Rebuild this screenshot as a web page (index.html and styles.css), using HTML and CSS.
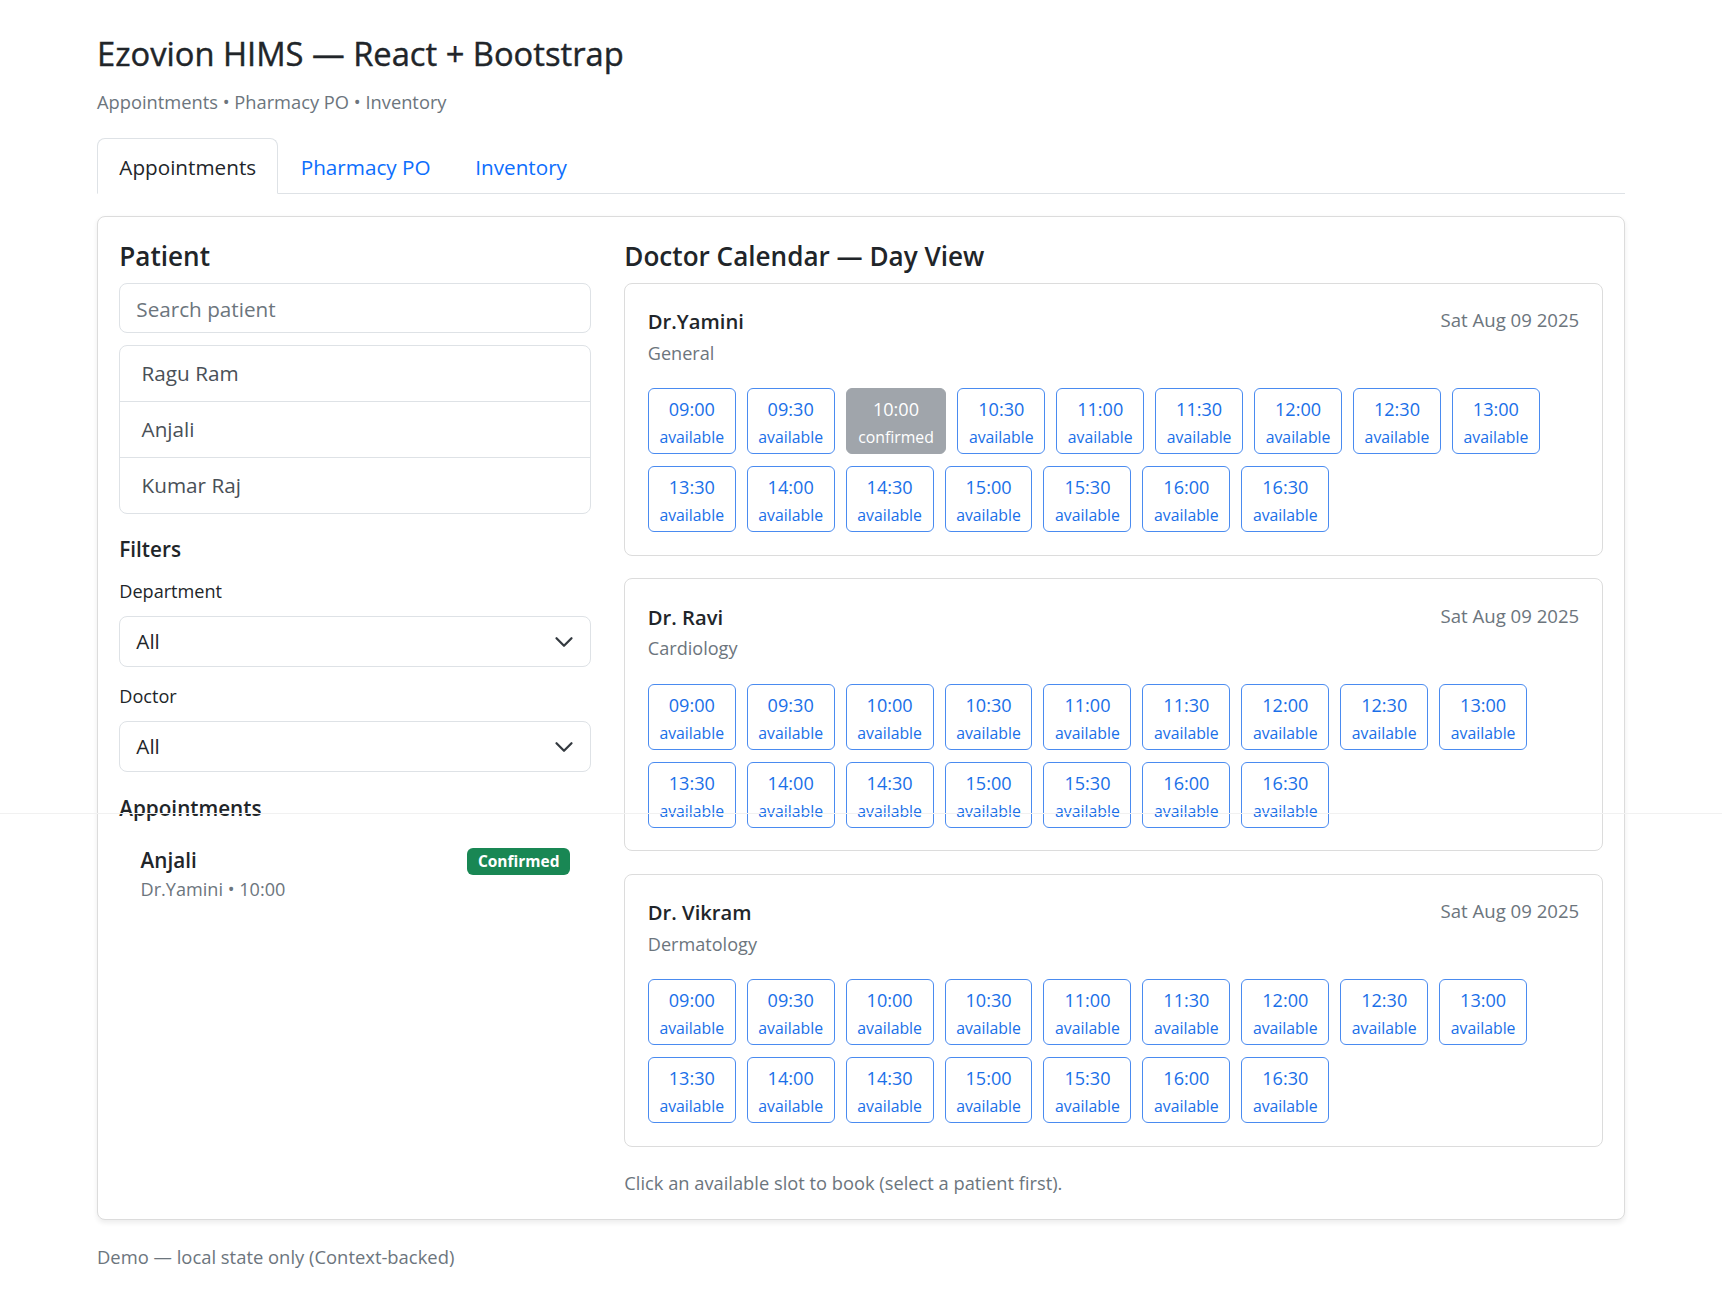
FILE: index.html
```html
<!DOCTYPE html>
<html lang="en">
<head>
<meta charset="utf-8">
<title>Ezovion HIMS — React + Bootstrap</title>
<link rel="stylesheet" href="styles.css">
</head>
<body>
<div class="artifact-line"></div>
<div class="container">
  <h3 class="title">Ezovion HIMS — React + Bootstrap</h3>
  <p class="subtitle">Appointments • Pharmacy PO • Inventory</p>
  <ul class="tabs">
    <li><a class="tab active">Appointments</a></li>
    <li><a class="tab">Pharmacy PO</a></li>
    <li><a class="tab">Inventory</a></li>
  </ul>

  <div class="card main-card">
    <div class="main-grid">
      <section class="left">
        <h5 class="h5">Patient</h5>
        <div class="input"><span class="placeholder">Search patient</span></div>
        <div class="list">
          <div class="list-item">Ragu Ram</div>
          <div class="list-item">Anjali</div>
          <div class="list-item">Kumar Raj</div>
        </div>
        <h6 class="h6 filters">Filters</h6>
        <div class="label">Department</div>
        <div class="select"><span>All</span><svg class="chev" viewBox="0 0 16 16" width="20" height="20"><path d="m2 5 6 6 6-6" fill="none" stroke="#343a40" stroke-width="1.8" stroke-linecap="round" stroke-linejoin="round"/></svg></div>
        <div class="label label-doctor">Doctor</div>
        <div class="select"><span>All</span><svg class="chev" viewBox="0 0 16 16" width="20" height="20"><path d="m2 5 6 6 6-6" fill="none" stroke="#343a40" stroke-width="1.8" stroke-linecap="round" stroke-linejoin="round"/></svg></div>
        <h6 class="h6 appts">Appointments</h6>
        <div class="appt">
          <div class="appt-info">
            <div class="appt-name">Anjali</div>
            <div class="appt-meta">Dr.Yamini • 10:00</div>
          </div>
          <span class="badge">Confirmed</span>
        </div>
      </section>

      <section class="right">
        <h5 class="h5">Doctor Calendar — Day View</h5>

        <div class="doc-card">
          <div class="doc-head">
            <div>
              <div class="doc-name">Dr.Yamini</div>
              <div class="doc-dept">General</div>
            </div>
            <div class="doc-date">Sat Aug 09 2025</div>
          </div>
          <div class="slots">
            <div class="slot"><div class="t">09:00</div><div class="s">available</div></div>
            <div class="slot"><div class="t">09:30</div><div class="s">available</div></div>
            <div class="slot booked"><div class="t">10:00</div><div class="s">confirmed</div></div>
            <div class="slot"><div class="t">10:30</div><div class="s">available</div></div>
            <div class="slot"><div class="t">11:00</div><div class="s">available</div></div>
            <div class="slot"><div class="t">11:30</div><div class="s">available</div></div>
            <div class="slot"><div class="t">12:00</div><div class="s">available</div></div>
            <div class="slot"><div class="t">12:30</div><div class="s">available</div></div>
            <div class="slot"><div class="t">13:00</div><div class="s">available</div></div>
            <div class="slot"><div class="t">13:30</div><div class="s">available</div></div>
            <div class="slot"><div class="t">14:00</div><div class="s">available</div></div>
            <div class="slot"><div class="t">14:30</div><div class="s">available</div></div>
            <div class="slot"><div class="t">15:00</div><div class="s">available</div></div>
            <div class="slot"><div class="t">15:30</div><div class="s">available</div></div>
            <div class="slot"><div class="t">16:00</div><div class="s">available</div></div>
            <div class="slot"><div class="t">16:30</div><div class="s">available</div></div>
          </div>
        </div>

        <div class="doc-card">
          <div class="doc-head">
            <div>
              <div class="doc-name">Dr. Ravi</div>
              <div class="doc-dept">Cardiology</div>
            </div>
            <div class="doc-date">Sat Aug 09 2025</div>
          </div>
          <div class="slots">
            <div class="slot"><div class="t">09:00</div><div class="s">available</div></div>
            <div class="slot"><div class="t">09:30</div><div class="s">available</div></div>
            <div class="slot"><div class="t">10:00</div><div class="s">available</div></div>
            <div class="slot"><div class="t">10:30</div><div class="s">available</div></div>
            <div class="slot"><div class="t">11:00</div><div class="s">available</div></div>
            <div class="slot"><div class="t">11:30</div><div class="s">available</div></div>
            <div class="slot"><div class="t">12:00</div><div class="s">available</div></div>
            <div class="slot"><div class="t">12:30</div><div class="s">available</div></div>
            <div class="slot"><div class="t">13:00</div><div class="s">available</div></div>
            <div class="slot"><div class="t">13:30</div><div class="s">available</div></div>
            <div class="slot"><div class="t">14:00</div><div class="s">available</div></div>
            <div class="slot"><div class="t">14:30</div><div class="s">available</div></div>
            <div class="slot"><div class="t">15:00</div><div class="s">available</div></div>
            <div class="slot"><div class="t">15:30</div><div class="s">available</div></div>
            <div class="slot"><div class="t">16:00</div><div class="s">available</div></div>
            <div class="slot"><div class="t">16:30</div><div class="s">available</div></div>
          </div>
        </div>

        <div class="doc-card">
          <div class="doc-head">
            <div>
              <div class="doc-name">Dr. Vikram</div>
              <div class="doc-dept">Dermatology</div>
            </div>
            <div class="doc-date">Sat Aug 09 2025</div>
          </div>
          <div class="slots">
            <div class="slot"><div class="t">09:00</div><div class="s">available</div></div>
            <div class="slot"><div class="t">09:30</div><div class="s">available</div></div>
            <div class="slot"><div class="t">10:00</div><div class="s">available</div></div>
            <div class="slot"><div class="t">10:30</div><div class="s">available</div></div>
            <div class="slot"><div class="t">11:00</div><div class="s">available</div></div>
            <div class="slot"><div class="t">11:30</div><div class="s">available</div></div>
            <div class="slot"><div class="t">12:00</div><div class="s">available</div></div>
            <div class="slot"><div class="t">12:30</div><div class="s">available</div></div>
            <div class="slot"><div class="t">13:00</div><div class="s">available</div></div>
            <div class="slot"><div class="t">13:30</div><div class="s">available</div></div>
            <div class="slot"><div class="t">14:00</div><div class="s">available</div></div>
            <div class="slot"><div class="t">14:30</div><div class="s">available</div></div>
            <div class="slot"><div class="t">15:00</div><div class="s">available</div></div>
            <div class="slot"><div class="t">15:30</div><div class="s">available</div></div>
            <div class="slot"><div class="t">16:00</div><div class="s">available</div></div>
            <div class="slot"><div class="t">16:30</div><div class="s">available</div></div>
          </div>
        </div>

        <div class="note">Click an available slot to book (select a patient first).</div>
      </section>
    </div>
  </div>

  <div class="demo">Demo — local state only (Context-backed)</div>
</div>
</body>
</html>
```

FILE: styles.css
```css
* { box-sizing: border-box; }

html, body {
  margin: 0;
  padding: 0;
  background: #fff;
}

body {
  font-family: "Open Sans", "Noto Sans", sans-serif;
  font-size: 20.7px;
  line-height: 31px;
  color: #212529;
}

.artifact-line {
  position: absolute;
  top: 813px;
  left: 0;
  right: 0;
  height: 1px;
  background: #f1f1f1;
}

.container {
  width: 1528px;
  margin: 0 auto;
  padding-top: 35px;
  padding-bottom: 24px;
}

.title {
  margin: 0 0 15px;
  font-size: 32.7px;
  line-height: 38px;
  font-weight: 500;
  -webkit-text-stroke: 0.4px #212529;
  color: #212529;
}

.subtitle {
  margin: 0 0 22.5px;
  font-size: 18.3px;
  line-height: 27px;
  color: #6c757d;
}

.tabs {
  display: flex;
  list-style: none;
  margin: 0 0 22px;
  padding: 0;
  border-bottom: 1px solid #dee2e6;
}

.tab {
  display: block;
  padding: 13.3px 21.3px 10.7px;
  border: 1px solid transparent;
  border-radius: 8px 8px 0 0;
  margin-bottom: -1px;
  color: #0d6efd;
  cursor: pointer;
}

.tab.active {
  color: #212529;
  background: #fff;
  border-color: #dee2e6 #dee2e6 #fff;
}

.card {
  background: #fff;
  border: 1px solid #dcdcdc;
  border-radius: 8px;
}

.main-card {
  padding: 21.3px 21.3px 23.3px;
  box-shadow: 0 2.7px 5.3px rgba(0, 0, 0, 0.075);
}

.main-grid {
  display: grid;
  grid-template-columns: 472px 1fr;
  column-gap: 33px;
}

.h5 {
  margin: 2px 0 11px;
  font-size: 26.1px;
  line-height: 31px;
  font-weight: 600;
}

.h6 {
  margin: 0;
  font-size: 20.7px;
  line-height: 25px;
  font-weight: 600;
}

.input {
  height: 50px;
  padding: 10px 16px 7px;
  border: 1px solid #dee2e6;
  border-radius: 8px;
}

.placeholder {
  color: #6c757d;
}

.list {
  margin-top: 12px;
  border: 1px solid #dee2e6;
  border-radius: 8px;
}

.list-item {
  padding: 12px 21.3px;
  color: #495057;
  border-top: 1px solid #dee2e6;
}

.list-item:first-child {
  border-top: none;
}

.filters {
  margin-top: 23px;
}

.label {
  margin-top: 16px;
  font-size: 18.1px;
  line-height: 27px;
}

.label-doctor {
  margin-top: 16.5px;
}

.select {
  display: flex;
  align-items: center;
  justify-content: space-between;
  margin-top: 11px;
  height: 51px;
  padding: 9px 16px;
  border: 1px solid #dee2e6;
  border-radius: 8px;
}

.chev {
  display: block;
  margin-top: 1px;
}

.appts {
  margin-top: 23.5px;
}

.appt {
  display: flex;
  justify-content: space-between;
  align-items: flex-start;
  padding: 24px 21.3px 10px;
}

.appt-name {
  font-weight: 600;
}

.appt-meta {
  font-size: 18.1px;
  line-height: 27px;
  color: #6c757d;
}

.badge {
  display: inline-block;
  margin-top: 3px;
  padding: 0 10.5px;
  height: 27px;
  line-height: 27px;
  font-size: 15.5px;
  font-weight: 700;
  color: #fff;
  background: #198754;
  border-radius: 6px;
}

.doc-card {
  border: 1px solid #dcdcdc;
  border-radius: 8px;
  padding: 22.5px;
  margin-bottom: 22.2px;
}

.doc-head {
  display: flex;
  justify-content: space-between;
  align-items: flex-start;
}

.doc-name {
  font-size: 20.2px;
  font-weight: 600;
}

.doc-dept {
  margin-top: 2.5px;
  font-size: 18.1px;
  line-height: 27px;
  color: #6c757d;
}

.doc-date {
  font-size: 18.6px;
  line-height: 27px;
  color: #6c757d;
}

.slots {
  display: flex;
  flex-wrap: wrap;
  column-gap: 11px;
  row-gap: 12px;
  margin-top: 21.7px;
}

.slot {
  padding: 7px 10.6px 4px;
  border: 1px solid #4a8bf0;
  border-radius: 6px;
  color: #1a6fe8;
  text-align: center;
}

.slot .t {
  font-size: 18.1px;
  line-height: 27px;
}

.slot .s {
  margin-top: 2px;
  font-size: 15.8px;
  line-height: 24px;
}

.slot.booked {
  padding-left: 11.5px;
  padding-right: 11.5px;
  background: #a0a5ab;
  border-color: #a0a5ab;
  color: #fff;
}

.note {
  font-size: 18.3px;
  line-height: 27px;
  color: #6c757d;
}

.demo {
  margin-top: 23px;
  font-size: 18.4px;
  line-height: 27px;
  color: #6c757d;
}
```
